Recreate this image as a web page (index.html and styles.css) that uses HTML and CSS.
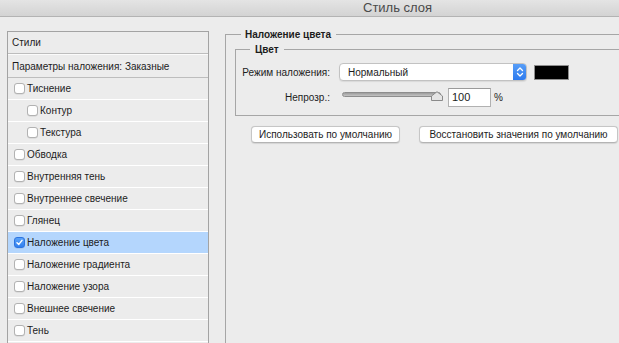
FILE: index.html
```html
<!DOCTYPE html>
<html lang="ru">
<head>
<meta charset="utf-8">
<title>Стиль слоя</title>
<link rel="stylesheet" href="styles.css">
</head>
<body>
<div class="titlebar"><span class="title">Стиль слоя</span></div>
<div class="main">
  <div class="panel">
    <div class="row hd hd1">Стили</div>
    <div class="row hd hd2">Параметры наложения: Заказные</div>
    <div class="row"><span class="cb"></span>Тиснение</div>
    <div class="row sub"><span class="cb"></span>Контур</div>
    <div class="row sub"><span class="cb"></span>Текстура</div>
    <div class="row"><span class="cb"></span>Обводка</div>
    <div class="row"><span class="cb"></span>Внутренняя тень</div>
    <div class="row"><span class="cb"></span>Внутреннее свечение</div>
    <div class="row"><span class="cb"></span>Глянец</div>
    <div class="row sel"><span class="cb on"><svg width="9" height="9" viewBox="0 0 9 9"><path d="M2 4.8 L3.8 6.4 L7 2.4" fill="none" stroke="#fff" stroke-width="1.5" stroke-linecap="round" stroke-linejoin="round"/></svg></span>Наложение цвета</div>
    <div class="row"><span class="cb"></span>Наложение градиента</div>
    <div class="row"><span class="cb"></span>Наложение узора</div>
    <div class="row"><span class="cb"></span>Внешнее свечение</div>
    <div class="row"><span class="cb"></span>Тень</div>
    <div class="row"></div>
  </div>
  <div class="content">
    <div class="group outer">
      <div class="ghead"><span class="gl short"></span><span class="gt">Наложение цвета</span><span class="gl long"></span></div>
      <div class="group inner">
        <div class="ghead"><span class="gl short2"></span><span class="gt gt2">Цвет</span><span class="gl long"></span></div>
        <div class="frow r1">
          <span class="lbl">Режим наложения:</span>
          <div class="select"><span class="sv">Нормальный</span><span class="step"><svg width="8" height="12" viewBox="0 0 8 12"><path d="M1.5 4.5 L4 2 L6.5 4.5 M1.5 7.5 L4 10 L6.5 7.5" fill="none" stroke="#fff" stroke-width="1.3" stroke-linecap="round" stroke-linejoin="round"/></svg></span></div>
          <span class="swatch"></span>
        </div>
        <div class="frow r2">
          <span class="lbl">Непрозр.:</span>
          <div class="slider"><span class="track"></span><svg class="thumb" width="12" height="10" viewBox="0 0 12 10"><path d="M0.5 9.5 L0.5 5 L6 0.7 L11.5 5 L11.5 9.5 Z" fill="#e4e4e4" stroke="#8a8a8a" stroke-width="1"/></svg></div>
          <span class="num">100</span>
          <span class="pct">%</span>
        </div>
      </div>
      <div class="buttons">
        <span class="btn b1">Использовать по умолчанию</span>
        <span class="btn b2">Восстановить значения по умолчанию</span>
      </div>
    </div>
  </div>
</div>
</body>
</html>
```

FILE: styles.css
```css
* { box-sizing: border-box; }
html, body { margin: 0; padding: 0; }
body {
  width: 619px;
  height: 343px;
  overflow: hidden;
  background: #ececec;
  font-family: "Liberation Sans", Arial, sans-serif;
  font-size: 10px;
  color: #1c1c1c;
}
.titlebar {
  height: 17px;
  background: linear-gradient(#e4e4e4, #d3d3d3);
  border-bottom: 1px solid #b3b3b3;
  padding-left: 363px;
  line-height: 15px;
}
.title {
  font-size: 13px;
  color: #4a4a4a;
}
.main {
  display: flex;
  padding-top: 14px;
  height: 326px;
  overflow: hidden;
}
.panel {
  margin-left: 7px;
  width: 202px;
  flex: none;
  border: 1px solid #a3a3a3;
  border-bottom: none;
  background: #ececec;
}
.row {
  height: 22px;
  border-bottom: 1px solid #ffffff;
  display: flex;
  align-items: center;
  padding-left: 6px;
  white-space: nowrap;
}
.row.hd { padding-left: 4px; }
.row.hd1 { border-bottom: 1px solid #bdbdbd; }
.row.hd2 { height: 24px; border-top: 1px solid #fbfbfb; border-bottom: 1px solid #bdbdbd; }
.row.sub { padding-left: 19px; }
.row.sel { background: #b4d6fd; }
.cb {
  width: 11px;
  height: 11px;
  border: 1px solid #b2b2b2;
  border-radius: 3px;
  background: #fff;
  box-shadow: 0 0.5px 0.5px rgba(0,0,0,0.12);
  margin-right: 2px;
  flex: none;
  display: flex;
  align-items: center;
  justify-content: center;
}
.cb.on {
  background: linear-gradient(#5aa2f7, #2f7fef);
  border-color: #2c74e0;
}
.content {
  flex: 1;
  overflow: hidden;
  margin-top: -14px;
  padding-top: 17px;
  height: 340px;
}
.group {
  display: flex;
  flex-direction: column;
  border-left: 1px solid #a6a6a6;
}
.outer {
  margin-left: 16px;
  margin-right: -20px;
  height: 400px;
}
.ghead {
  height: 11px;
  margin-top: -5px;
  margin-left: -1px;
  display: flex;
  align-items: center;
}
.gl { height: 1px; background: #a6a6a6; }
.gl.short { width: 16px; }
.gl.short2 { width: 15px; }
.gl.long { flex: 1; }
.gt {
  font-weight: bold;
  margin: 0 5px 0 4px;
  white-space: nowrap;
  line-height: 11px;
}
.gt.gt2 { margin: 0 5px 0 5px; }
.inner {
  margin-left: 9px;
  margin-top: 9px;
  margin-right: -20px;
  border-bottom: 1px solid #a6a6a6;
  padding-bottom: 8px;
}
.frow {
  display: flex;
  align-items: center;
}
.r1 { margin-top: 8px; height: 18px; }
.r2 { margin-top: 7px; height: 19px; }
.lbl {
  width: 94px;
  text-align: right;
  white-space: nowrap;
  flex: none;
}
.select {
  margin-left: 9px;
  width: 188px;
  height: 18px;
  background: #fff;
  border: 1px solid #c2c2c2;
  border-radius: 4px;
  box-shadow: 0 1px 1px rgba(0,0,0,0.08);
  display: flex;
  align-items: center;
  flex: none;
  overflow: hidden;
}
.sv { flex: 1; padding-left: 8px; }
.step {
  width: 14px;
  height: 18px;
  margin-right: -1px;
  background: linear-gradient(#5aa0f8, #2a78ee);
  border-radius: 0 4px 4px 0;
  display: flex;
  align-items: center;
  justify-content: center;
}
.swatch {
  margin-left: 7px;
  width: 35px;
  height: 15px;
  background: #000;
  border: 1px solid #8e8e8e;
  flex: none;
}
.slider {
  margin-left: 12px;
  width: 101px;
  height: 19px;
  position: relative;
  flex: none;
}
.track {
  position: absolute;
  left: 0;
  right: 2px;
  top: 4px;
  height: 5px;
  border-radius: 3px;
  background: linear-gradient(#9c9c9c, #c4c4c4);
  border: 1px solid #8d8d8d;
}
.thumb {
  position: absolute;
  left: 89px;
  top: 3px;
}
.num {
  margin-left: 5px;
  width: 43px;
  height: 19px;
  background: #fff;
  border: 1px solid #b1b1b1;
  border-top-color: #9a9a9a;
  padding-left: 3px;
  line-height: 17px;
  font-size: 11px;
  flex: none;
}
.pct { margin-left: 3px; }
.buttons {
  display: flex;
  margin-top: 10px;
  margin-left: 25px;
  gap: 19px;
}
.btn {
  height: 17px;
  background: #fff;
  border: 1px solid #c6c6c6;
  border-bottom-color: #b4b4b4;
  border-radius: 4px;
  box-shadow: 0 0.5px 1px rgba(0,0,0,0.1);
  display: flex;
  align-items: center;
  justify-content: center;
  white-space: nowrap;
  flex: none;
}
.b1 { width: 149px; }
.b2 { width: 199px; }
```
